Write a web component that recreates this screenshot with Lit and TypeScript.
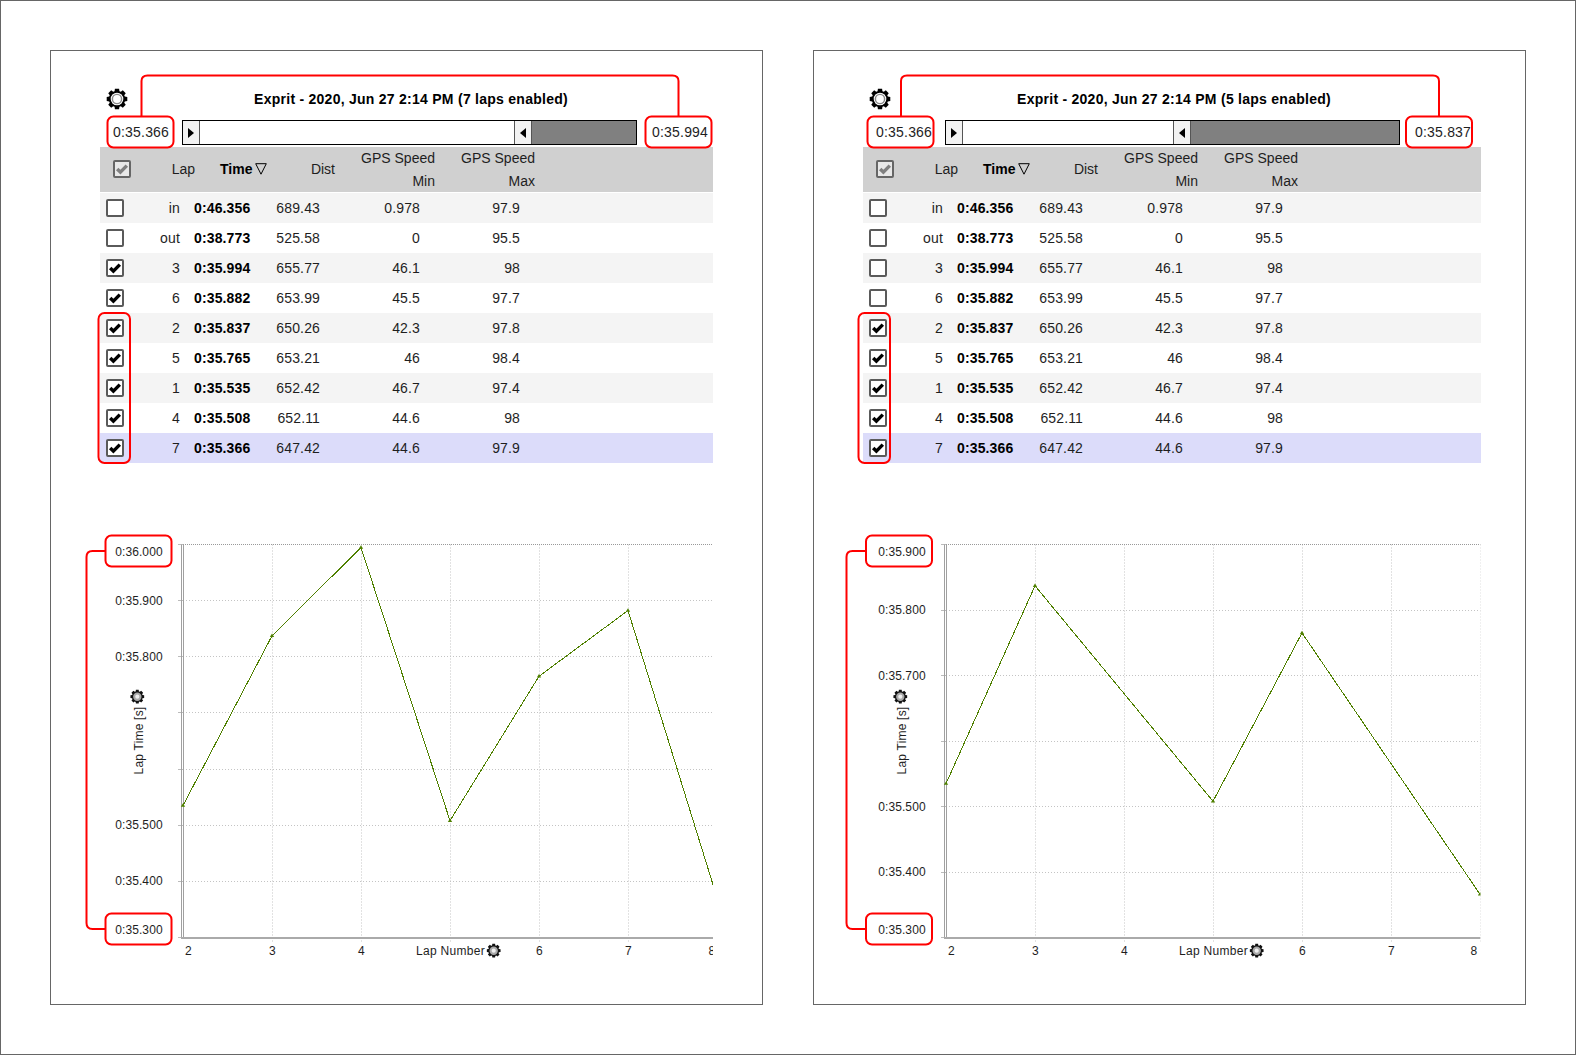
import { LitElement, html, svg, css } from "lit";
import { customElement, property } from "lit/decorators.js";

type Lap = { lap: string; time: string; dist: string; min: string; max: string };

const LAPS: Lap[] = [
  { lap: "in", time: "0:46.356", dist: "689.43", min: "0.978", max: "97.9" },
  { lap: "out", time: "0:38.773", dist: "525.58", min: "0", max: "95.5" },
  { lap: "3", time: "0:35.994", dist: "655.77", min: "46.1", max: "98" },
  { lap: "6", time: "0:35.882", dist: "653.99", min: "45.5", max: "97.7" },
  { lap: "2", time: "0:35.837", dist: "650.26", min: "42.3", max: "97.8" },
  { lap: "5", time: "0:35.765", dist: "653.21", min: "46", max: "98.4" },
  { lap: "1", time: "0:35.535", dist: "652.42", min: "46.7", max: "97.4" },
  { lap: "4", time: "0:35.508", dist: "652.11", min: "44.6", max: "98" },
  { lap: "7", time: "0:35.366", dist: "647.42", min: "44.6", max: "97.9" },
];

type Cfg = {
  enabled: number;
  firstChecked: number;
  maxLabel: string;
  tableW: number;
  trackW: number;
  plotRight: number;
  lastLabelX: number;
  top: number;
  step: number;
  tickCount: number;
  labels: { t: string; y: number }[];
  points: [number, number][];
  ann: {
    minBox: number;
    maxBox: number;
    minStem: number;
    maxStem: number;
    chkL: number;
    chartL: number;
    rail: number;
  };
};

const gearPath = (() => {
  const pts: string[] = [];
  const teeth = 8;
  for (let i = 0; i < teeth; i++) {
    const a = (i / teeth) * Math.PI * 2 - Math.PI / 2;
    const w = 0.2;
    const s = 0.1;
    const seq: [number, number][] = [
      [a - w - s, 0.78],
      [a - w, 1],
      [a + w, 1],
      [a + w + s, 0.78],
    ];
    for (const [ang, r] of seq) {
      pts.push(`${(Math.cos(ang) * r).toFixed(3)} ${(Math.sin(ang) * r).toFixed(3)}`);
    }
  }
  return "M" + pts.join("L") + "Z";
})();

const gearFrag = (cx: number, cy: number, r: number) => svg`
  <g transform="translate(${cx} ${cy}) scale(${r})">
    <path d=${gearPath} fill="#000"></path>
    <circle r="0.6" fill="#fff"></circle>
    <circle r="0.44" fill="none" stroke="#8a8a8a" stroke-width="0.14"></circle>
  </g>`;

const smallGearFrag = (cx: number, cy: number, r: number) => svg`
  <g transform="translate(${cx} ${cy}) scale(${r})">
    <path d=${gearPath} fill="#111"></path>
    <circle r="0.6" fill="#a8a8a8"></circle>
    <circle r="0.3" fill="#eee"></circle>
  </g>`;

const CHECK = svg`<svg class="tick" viewBox="0 0 18 18" width="18" height="18"><path d="M4.2 9l3.2 3.2L13.8 5.6" fill="none" stroke="currentColor" stroke-width="3.4"></path></svg>`;

@customElement("lap-panel")
class LapPanel extends LitElement {
  @property({ attribute: false }) cfg!: Cfg;

  static styles = css`
    :host {
      display: block;
      position: relative;
      width: 713px;
      height: 955px;
      box-sizing: border-box;
      border: 1px solid #666;
      background: #fff;
      font-family: "Liberation Sans", Arial, sans-serif;
      font-size: 14px;
      color: #1e1e1e;
    }
    .content {
      margin-left: 49px;
      padding-top: 38px;
    }
    .title-row,
    .range-row {
      display: grid;
      grid-template-columns: 82px auto;
      justify-content: start;
    }
    .title-row {
      height: 20px;
      align-items: center;
    }
    .gear {
      display: block;
      margin-left: 6px;
      margin-top: -1px;
    }
    .title {
      box-sizing: border-box;
      width: 455px;
      padding-left: 3px;
      margin-top: -1px;
      text-align: center;
      font-weight: 700;
      color: #000;
      white-space: nowrap;
      letter-spacing: 0.26px;
    }
    .range-row {
      grid-template-columns: 82px auto auto;
      margin-top: 11px;
      height: 25px;
      align-items: center;
      letter-spacing: 0.2px;
    }
    .range-min {
      padding-left: 13px;
      padding-bottom: 2px;
    }
    .range-max {
      padding-left: 15px;
      padding-bottom: 2px;
    }
    .slider {
      display: flex;
      box-sizing: border-box;
      width: 455px;
      height: 25px;
      border: 1px solid #000;
      background: #808080;
    }
    .handle {
      flex: none;
      box-sizing: border-box;
      width: 17px;
      display: flex;
      align-items: center;
      justify-content: center;
      background: #f2f2f2;
      border-right: 1px solid #555;
    }
    .handle.right {
      width: 18px;
      border-left: 1px solid #555;
      border-right: 1px solid #555;
    }
    .track {
      flex: none;
      background: #fff;
    }
    .table {
      margin-top: 2px;
    }
    .row {
      display: grid;
      grid-template-columns: 40px 55px 75px 65px 100px 100px 1fr;
      align-items: center;
      height: 30px;
      letter-spacing: 0.14px;
    }
    .head {
      height: 45px;
      margin-bottom: 1px;
      background: #d0d0d0;
      letter-spacing: 0;
    }
    .row:nth-child(even) {
      background: #f4f4f4;
    }
    .row.sel {
      background: #dcdcfa;
    }
    .num {
      text-align: right;
      padding-right: 15px;
    }
    .head .num {
      padding-right: 0;
      padding-bottom: 2px;
    }
    .head .num.stack {
      padding-bottom: 0;
    }
    .time {
      font-weight: 700;
      color: #000;
      margin-left: -1px;
    }
    .head .time {
      display: flex;
      align-items: center;
      gap: 3px;
      padding-left: 25px;
      padding-bottom: 2px;
      margin-left: 0;
    }
    .stack {
      line-height: 23px;
    }
    .box {
      box-sizing: border-box;
      width: 18px;
      height: 18px;
      margin-left: 6px;
      border: 2px solid #5a5a5a;
      border-radius: 2px;
      background: #fff;
      color: #000;
      position: relative;
    }
    .tick {
      position: absolute;
      left: -2px;
      top: -2px;
    }
    .head .box {
      margin-left: 13px;
      margin-top: -2px;
      border-color: #666;
      background: #e8e8e8;
      color: #808080;
    }
    .chart {
      display: block;
      margin-top: 37px;
    }
    .chart text {
      fill: #1e1e1e;
      font-family: "Liberation Sans", Arial, sans-serif;
      font-size: 12px;
      letter-spacing: 0.1px;
    }
    .chart text.axis-x {
      letter-spacing: 0.3px;
    }
    .chart text.axis-y {
      letter-spacing: 0.2px;
    }
    .ann {
      position: absolute;
      left: 0;
      top: 0;
      pointer-events: none;
    }
  `;

  private chart() {
    const c = this.cfg;
    const H = 470;
    const L = 132;
    const R = c.plotRight;
    const T = 44.5;
    const B = 437.5;
    const xs = [0, 1, 2, 3, 4, 5, 6].map((k) => L + k * 89);
    const ys = Array.from({ length: c.tickCount }, (_, k) => c.top + k * c.step);
    const clipId = "plot-" + c.enabled;
    const xLabels: [string, number][] = [
      ["2", 137.5],
      ["3", 221.5],
      ["4", 310.5],
      ["6", 488.5],
      ["7", 577.5],
      ["8", c.lastLabelX],
    ];
    const pts = c.points.map(([k, y]) => [L + k * 89, y] as [number, number]);
    return html`<svg class="chart" width="711" height=${H} viewBox="0 0 711 ${H}">
      <defs>
        <clipPath id=${clipId}><rect x="0" y="0" width=${R} height=${H}></rect></clipPath>
      </defs>
      <g clip-path="url(#${clipId})">
        ${xs.filter((x) => x > L).map(
          (x) => svg`<line x1=${x + 0.5} x2=${x + 0.5} y1=${T} y2=${B + 4} stroke="#c4c4c4" stroke-dasharray="1 2"></line>`
        )}
        ${ys.slice(1, -1).map(
          (y) => svg`<line x1=${L} x2=${R} y1=${Math.floor(y) + 0.5} y2=${Math.floor(y) + 0.5} stroke="#c4c4c4" stroke-dasharray="1 2"></line>
            <line x1=${L - 5} x2=${L} y1=${Math.floor(y) + 0.5} y2=${Math.floor(y) + 0.5} stroke="#bbb"></line>`
        )}
        <line x1=${L} x2=${R} y1=${T} y2=${T} stroke="#999" stroke-dasharray="1 1"></line>
        <line x1=${L - 5} x2=${L} y1=${T} y2=${T} stroke="#bbb"></line>
        <line x1=${L - 5} x2=${L} y1=${B} y2=${B} stroke="#bbb"></line>
        <line x1=${L - 1.5} x2=${L - 1.5} y1=${T} y2=${B} stroke="#a0a0a0"></line>
        <line x1=${L + 0.5} x2=${L + 0.5} y1=${T} y2=${B} stroke="#a0a0a0"></line>
        <rect x=${L - 2} y=${B - 0.5} width=${R - L + 2} height="2" fill="#aaa"></rect>
        <polyline
          points=${pts.map((p) => p.join(",")).join(" ")}
          fill="none"
          stroke="#4f8000"
          stroke-width="1"
          shape-rendering="crispEdges"
        ></polyline>
        ${pts.map(
          ([x, y]) => svg`<path d="M${x} ${y - 2.2}L${x + 2.2} ${y + 1.2}L${x - 2.2} ${y + 1.2}Z" fill="#4f8000"></path>`
        )}
        ${xLabels.map(([t, x]) => svg`<text x=${x} y="454.5" text-anchor="middle">${t}</text>`)}
      </g>
      ${c.labels.map((l) => svg`<text x=${111.7} y=${l.y + 4} text-anchor="end">${l.t}</text>`)}
      <text class="axis-y" transform="translate(92 240.5) rotate(-90)" text-anchor="middle">Lap Time [s]</text>
      ${smallGearFrag(86.3, 196.7, 7)}
      <text class="axis-x" x="365" y="454.5">Lap Number</text>
      ${smallGearFrag(442.7, 450.7, 7)}
    </svg>`;
  }

  private annotations() {
    const a = this.cfg.ann;
    const r = 6;
    const box = (x: number, y: number, w: number, h: number) =>
      svg`<rect x=${x} y=${y} width=${w} height=${h} rx=${r} ry=${r} fill="none"></rect>`;
    return html`<svg class="ann" width="711" height="953" viewBox="0 0 711 953" fill="none" stroke="#f00" stroke-width="2">
      ${box(a.minBox, 65.5, 66, 31)} ${box(a.maxBox, 65.5, 66, 31)}
      <path d="M${a.minStem} 65V30Q${a.minStem} 24.5 ${a.minStem + 6} 24.5H${a.maxStem - 6}Q${a.maxStem} 24.5 ${a.maxStem} 30V65"></path>
      ${box(a.chkL, 262, 31.5, 150)}
      ${box(a.chartL, 484.5, 66, 31)}
      ${box(a.chartL, 862.5, 66, 31)}
      <path d="M${a.chartL} 500H${a.rail + 6}Q${a.rail} 500 ${a.rail} 506V872Q${a.rail} 878 ${a.rail + 6} 878H${a.chartL}"></path>
    </svg>`;
  }

  render() {
    const c = this.cfg;
    return html`
      <div class="content">
        <div class="title-row">
          <svg class="gear" width="22" height="22" viewBox="-11 -11 22 22">${gearFrag(0, 0, 10.5)}</svg>
          <div class="title">Exprit - 2020, Jun 27 2:14 PM (${c.enabled} laps enabled)</div>
        </div>
        <div class="range-row">
          <div class="range-min">0:35.366</div>
          <div class="slider">
            <div class="handle">
              <svg width="8" height="10" viewBox="0 0 8 10"><path d="M1 0L7 5L1 10Z" fill="#000"></path></svg>
            </div>
            <div class="track" style="width:${c.trackW}px"></div>
            <div class="handle right">
              <svg width="8" height="10" viewBox="0 0 8 10"><path d="M7 0L1 5L7 10Z" fill="#000"></path></svg>
            </div>
          </div>
          <div class="range-max">${c.maxLabel}</div>
        </div>
        <div class="table" style="width:${c.tableW}px">
          <div class="row head">
            <div class="box">${CHECK}</div>
            <div class="num">Lap</div>
            <div class="time">
              Time
              <svg width="12" height="12" viewBox="0 0 12 12"><path d="M0.7 0.7H11.3L6 11.2Z" fill="none" stroke="#000"></path></svg>
            </div>
            <div class="num">Dist</div>
            <div class="num stack">GPS Speed<br />Min</div>
            <div class="num stack">GPS Speed<br />Max</div>
            <div></div>
          </div>
          ${LAPS.map(
            (l, i) => html`<div class="row ${i === LAPS.length - 1 ? "sel" : ""}">
              <div class="box">${i >= c.firstChecked ? CHECK : ""}</div>
              <div class="num">${l.lap}</div>
              <div class="time">${l.time}</div>
              <div class="num">${l.dist}</div>
              <div class="num">${l.min}</div>
              <div class="num">${l.max}</div>
              <div></div>
            </div>`
          )}
        </div>
      </div>
      ${this.chart()} ${this.annotations()}
    `;
  }
}

const y1 = (v: number) => 44.2 + (36 - v) * 562;
const y2 = (v: number) => 44.5 + (35.9 - v) * 655;

const LEFT: Cfg = {
  enabled: 7,
  firstChecked: 2,
  maxLabel: "0:35.994",
  tableW: 613,
  trackW: 314,
  plotRight: 662,
  lastLabelX: 661,
  top: 44.2,
  step: 56.2,
  tickCount: 8,
  labels: [
    { t: "0:36.000", y: 51.7 },
    { t: "0:35.900", y: 101 },
    { t: "0:35.800", y: 156.6 },
    { t: "0:35.500", y: 325 },
    { t: "0:35.400", y: 381 },
    { t: "0:35.300", y: 430 },
  ],
  points: [
    [0, y1(35.535)],
    [1, y1(35.837)],
    [2, y1(35.994)],
    [3, y1(35.508)],
    [4, y1(35.765)],
    [5, y1(35.882)],
    [6, y1(35.366) - 3],
  ],
  ann: { minBox: 56.5, maxBox: 594.5, minStem: 90.5, maxStem: 627.5, chkL: 47.5, chartL: 54.5, rail: 35.5 },
};

const RIGHT: Cfg = {
  enabled: 5,
  firstChecked: 4,
  maxLabel: "0:35.837",
  tableW: 618,
  trackW: 210,
  plotRight: 666.5,
  lastLabelX: 660,
  top: 44.5,
  step: 65.5,
  tickCount: 7,
  labels: [
    { t: "0:35.900", y: 51.7 },
    { t: "0:35.800", y: 110 },
    { t: "0:35.700", y: 176 },
    { t: "0:35.500", y: 307 },
    { t: "0:35.400", y: 372 },
    { t: "0:35.300", y: 430 },
  ],
  points: [
    [0, y2(35.535)],
    [1, y2(35.837)],
    [3, y2(35.508)],
    [4, y2(35.765)],
    [6, y2(35.366)],
  ],
  ann: { minBox: 53.5, maxBox: 592, minStem: 87, maxStem: 625, chkL: 44.5, chartL: 52, rail: 32.5 },
};

@customElement("app-root")
export class AppRoot extends LitElement {
  static styles = css`
    :host {
      display: block;
    }
    .frame {
      display: flex;
      gap: 50px;
      box-sizing: border-box;
      width: 1576px;
      height: 1055px;
      padding: 49px;
      border: 1px solid #666;
      background: #fff;
    }
  `;
  render() {
    return html`<div class="frame">
      <lap-panel .cfg=${LEFT}></lap-panel>
      <lap-panel .cfg=${RIGHT}></lap-panel>
    </div>`;
  }
}
